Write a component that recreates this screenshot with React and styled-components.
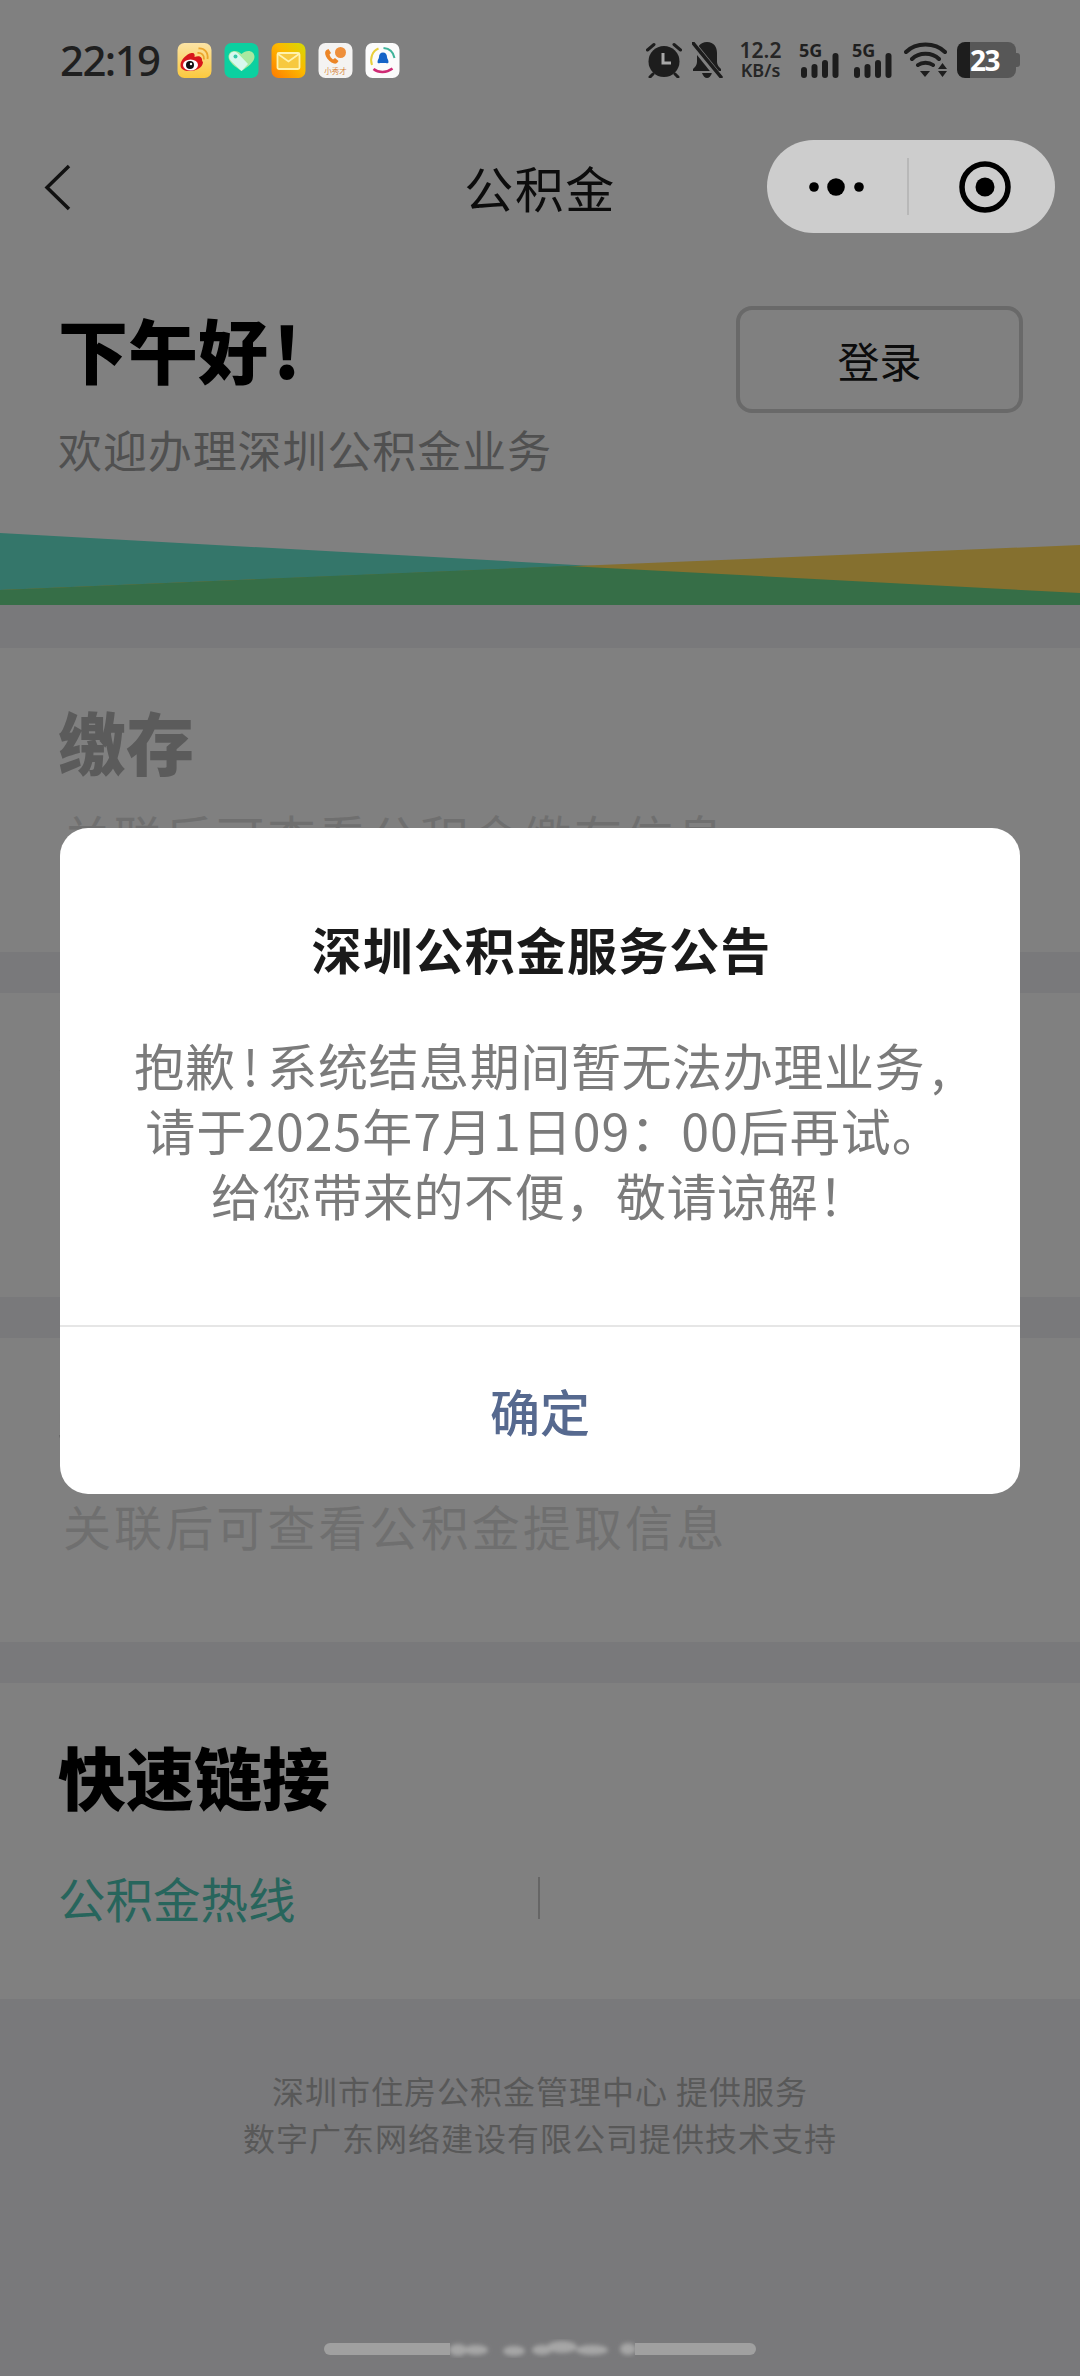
import React from "react";
import styled, { createGlobalStyle } from "styled-components";

const GlobalStyle = createGlobalStyle`
  html, body {
    margin: 0;
    padding: 0;
    background: #79797b;
  }
  * {
    box-sizing: border-box;
  }
`;

const Page = styled.div`
  position: relative;
  display: flex;
  flex-direction: column;
  width: 1080px;
  height: 2376px;
  overflow: hidden;
  background: #79797b;
  font-family: "Noto Sans CJK SC", "Noto Sans", sans-serif;
`;

const Header = styled.header`
  display: flex;
  flex-direction: column;
  height: 605px;
  background: #808080;
`;

const StatusBar = styled.div`
  display: flex;
  align-items: flex-start;
  justify-content: space-between;
  height: 140px;
  padding: 42px 64px 0 60px;
`;

const StatusLeft = styled.div`
  display: flex;
  align-items: center;
  height: 36px;
`;

const Time = styled.span`
  width: 117px;
  font-family: "Noto Sans", sans-serif;
  font-size: 42px;
  font-weight: 500;
  line-height: 36px;
  letter-spacing: -1.6px;
  color: #1f1f1f;
`;

const AppIcons = styled.div`
  display: flex;
  gap: 12px;
`;

const StatusRight = styled.div`
  display: flex;
  align-items: flex-start;
  height: 36px;
`;

const StatusIcon = styled.svg`
  display: block;
  flex: none;
  margin-left: ${props => props.$gap || 0}px;
`;

const Speed = styled.div`
  display: flex;
  flex-direction: column;
  align-items: center;
  width: 43px;
  margin: -2px 0 0 16px;
  font-family: "Noto Sans", sans-serif;
  font-weight: 600;
  color: #262626;
`;

const SpeedValue = styled.span`
  font-size: 21px;
  line-height: 20px;
`;

const SpeedUnit = styled.span`
  font-size: 18px;
  line-height: 20px;
  white-space: nowrap;
`;

const Signal = styled.div`
  position: relative;
  width: 41px;
  height: 36px;
  margin-left: ${props => props.$gap}px;
`;

const SignalLabel = styled.span`
  position: absolute;
  top: -2px;
  left: 0;
  font-family: "Noto Sans", sans-serif;
  font-size: 18px;
  font-weight: 700;
  line-height: 20px;
  color: #1f1f1f;
`;

const SignalMeter = styled.svg`
  position: absolute;
  top: 0;
  left: 0;
`;

const Battery = styled.div`
  position: relative;
  display: flex;
  align-items: center;
  width: 59px;
  height: 36px;
  margin-left: 10px;
  padding-left: 13px;
  border-radius: 8px;
  background: linear-gradient(to right, #1d1d1d 13px, #575757 13px);
  font-family: "Noto Sans", sans-serif;
  font-size: 28px;
  font-weight: 700;
  line-height: 36px;
  letter-spacing: -1.5px;
  color: #fff;

  &::after {
    content: "";
    position: absolute;
    top: 11px;
    right: -4px;
    width: 4px;
    height: 14px;
    border-radius: 0 3px 3px 0;
    background: #575757;
  }
`;

const NavBar = styled.nav`
  display: grid;
  grid-template-columns: 1fr auto 1fr;
  align-items: center;
  height: 93px;
  padding: 0 25px;
`;

const BackIcon = styled.svg`
  display: block;
  margin-left: 19px;
`;

const NavTitle = styled.h1`
  margin: 0;
  font-size: 49px;
  font-weight: 400;
  line-height: 93px;
  letter-spacing: 1.5px;
  color: #0c0c0c;
`;

const Capsule = styled.div`
  display: flex;
  align-items: center;
  justify-self: end;
  width: 288px;
  height: 93px;
  border-radius: 47px;
  background: #cdcdcd;
`;

const CapsuleSide = styled.div`
  display: flex;
  align-items: center;
  justify-content: center;
  flex: 1;
  padding-left: ${props => props.$inset || 0}px;
`;

const CapsuleDivider = styled.div`
  width: 2px;
  height: 57px;
  background: #b8b8b8;
`;

const Intro = styled.div`
  display: flex;
  align-items: flex-start;
  justify-content: space-between;
  padding: 73px 57px 0 60px;
`;

const Greeting = styled.h2`
  margin: 3px 0 0 -2px;
  font-size: 70px;
  font-weight: 900;
  line-height: 80px;
  color: #000;
`;

const GreetingMark = styled.span`
  margin-left: 5px;
`;

const Welcome = styled.p`
  margin: 28px 0 0 -2px;
  font-size: 44px;
  line-height: 64px;
  letter-spacing: 0.9px;
  color: #505050;
`;

const LoginButton = styled.button`
  width: 287px;
  height: 107px;
  border: 4px solid #696969;
  border-radius: 16px;
  background: transparent;
  font-family: inherit;
  font-size: 42px;
  color: #0c0c0c;
`;

const Wave = styled.svg`
  display: block;
  margin-top: auto;
`;

const Section = styled.section`
  height: ${props => props.$tall ? 316 : 304}px;
  margin-top: ${props => props.$first ? 43 : 41}px;
  padding: 48px 60px 0;
  background: #808080;
`;

const SectionTitle = styled.h3`
  margin: 0 0 0 -2px;
  font-size: 68px;
  font-weight: 900;
  line-height: 90px;
  color: ${props => props.$active ? "#000" : "#5b5b5b"};
`;

const SectionHint = styled.p`
  margin: 17px 0 0 3px;
  font-size: 48px;
  line-height: 64px;
  letter-spacing: 3.1px;
  color: #6f6f6f;
`;

const Links = styled.div`
  display: flex;
  align-items: center;
  margin: 45px 0 0 -2px;
`;

const LinkCell = styled.a`
  width: 480px;
  font-size: 47.5px;
  line-height: 64px;
  color: #27655c;
`;

const LinkDivider = styled.span`
  width: 2px;
  height: 42px;
  background: #666;
`;

const Footer = styled.footer`
  display: flex;
  flex: 1;
  flex-direction: column;
  align-items: center;
  padding-top: 68px;
`;

const FooterLine = styled.p`
  margin: 0;
  font-size: 32px;
  line-height: 47px;
  letter-spacing: 1px;
  color: #585858;
`;

const HomeBar = styled.div`
  display: flex;
  align-items: center;
  margin-top: auto;
  margin-bottom: 9px;
`;

const HomePill = styled.span`
  width: ${props => props.$width}px;
  height: 12px;
  border-radius: ${props => props.$left ? "6px 0 0 6px" : "0 6px 6px 0"};
  background: #a0a0a0;
`;

const Modal = styled.div`
  position: absolute;
  top: 828px;
  left: 60px;
  display: flex;
  flex-direction: column;
  width: 960px;
  height: 666px;
  border-radius: 28px;
  background: #fff;
  text-align: center;
`;

const ModalBody = styled.div`
  flex: none;
  height: 499px;
  padding-top: 85px;
  border-bottom: 2px solid #e6e6e6;
`;

const ModalTitle = styled.h4`
  margin: 0 0 0 3px;
  font-size: 50px;
  font-weight: 700;
  line-height: 70px;
  letter-spacing: 1.1px;
  color: #1a1a1a;
`;

const ModalText = styled.p`
  margin: 49px 0 0;
  font-size: 50px;
  line-height: 65px;
  letter-spacing: 0.6px;
  color: #7b7b7b;
`;

const ModalMark = styled.span`
  margin: 0 ${props => props.$after || 0}px 0 ${props => props.$before || 0}px;
`;

const ModalDateLine = styled.span`
  margin-left: 8px;
  letter-spacing: 1px;
`;

const ModalAction = styled.button`
  flex: 1;
  padding: 0 0 2px;
  border: 0;
  background: transparent;
  font-family: inherit;
  font-size: 50px;
  font-weight: 500;
  color: #56698f;
`;

const WeiboIcon = () => (
  <svg width="35" height="35" viewBox="0 0 34 35">
    <defs>
      <linearGradient id="wb" x1="0" y1="0" x2="0" y2="1">
        <stop offset="0" stopColor="#fbe3a5" />
        <stop offset="1" stopColor="#fbc93e" />
      </linearGradient>
    </defs>
    <rect width="34" height="35" rx="7" fill="url(#wb)" />
    <path d="M3 22c0-5 6-11 11-12 3-.6 3.500 1.500 3 4 3-1 6-1 7 1 1 1.500 0 3 1.500 4 0 6-8 9-13 9-6 0-9.500-2-9.500-6z" fill="#d8161b" />
    <ellipse cx="13" cy="22" rx="7.500" ry="5.500" fill="#fff" />
    <circle cx="12.500" cy="22" r="4" fill="#111" />
    <circle cx="13.500" cy="21" r="1.200" fill="#fff" />
    <path d="M20 10c4-.5 7 2 6.500 6.500M21 5.500c6-.5 10 4 9 10.500" fill="none" stroke="#eba52c" strokeWidth="1.800" />
  </svg>
);

const HeartIcon = () => (
  <svg width="35" height="35" viewBox="0 0 34 35">
    <rect width="34" height="35" rx="7" fill="#0bd0a0" />
    <path d="M17 28C11 24 4 19 4 14c0-4 3-6 6-6 2.500 0 5 1 7 3 2-2 4.500-3 7-3 3 0 6 2 6 6 0 5-7 10-13 14z" fill="#a9e9a0" />
    <path d="M17 28l-9.500-9c-2-2-3.500-4-2.500-7 1-3 4-4 6.500-3 1 .4 2 1.200 3 2.400l9 9.600z" fill="#d8f8ee" />
    <circle cx="11" cy="13.500" r="2" fill="#35c9a8" />
  </svg>
);

const MailIcon = () => (
  <svg width="35" height="35" viewBox="0 0 34 35">
    <defs>
      <linearGradient id="ml" x1="0" y1="1" x2="1" y2="0">
        <stop offset="0" stopColor="#ff7a00" />
        <stop offset="0.55" stopColor="#fdb800" />
        <stop offset="1" stopColor="#d4dc05" />
      </linearGradient>
    </defs>
    <rect width="34" height="35" rx="7" fill="url(#ml)" />
    <rect x="6" y="10" width="22" height="16" rx="1.500" fill="#f7c93f" stroke="#fff3ad" strokeWidth="1.800" />
    <path d="M6.500 11l10.500 7.500L27.500 11" fill="none" stroke="#fff3ad" strokeWidth="1.800" />
  </svg>
);

const TutorIcon = () => (
  <svg width="35" height="35" viewBox="0 0 34 35">
    <rect width="34" height="35" rx="7" fill="#f4f3f2" />
    <circle cx="22" cy="9.500" r="5.500" fill="#ee8f3b" />
    <path d="M8 7c-1.500 1-2 3.500-.5 6.500 1.500 3 4.500 6 8 7 2 .5 3.500-.5 4.500-2.500l-3.500-3-2 1.500c-1.500-1-3-3-3.500-5l1.500-1.500L10 6z" fill="#ec8526" />
    <text x="17" y="31" textAnchor="middle" fontSize="7.500" fill="#d98a45" fontFamily="Noto Sans CJK SC">小秀才</text>
  </svg>
);

const NewsIcon = () => (
  <svg width="35" height="35" viewBox="0 0 34 35">
    <rect width="34" height="35" rx="7" fill="#fbfbfb" />
    <path d="M6.500 22C4 15 7 8 13 5.500" fill="none" stroke="#e8cf3c" strokeWidth="2" />
    <path d="M18 5c5.500.5 10 4 11 10" fill="none" stroke="#3fb39a" strokeWidth="2" />
    <path d="M8 26c5 4 13 4 19-.5" fill="none" stroke="#cf2a74" strokeWidth="2.600" />
    <path d="M17.500 9.500c2.500 0 4 2 4 4.500 0 1.500 1.500 3 1.500 5 0 1.500-1.500 1.500-2.500 1h-6c-1 .5-2.500.5-2.500-1 0-2 1.500-3.500 1.500-5 0-2.500 1.500-4.500 4-4.500z" fill="#1463c7" />
  </svg>
);

const AlarmIcon = () => (
  <StatusIcon width="36" height="36" viewBox="0 0 36 36">
    <circle cx="18" cy="19.500" r="15.500" fill="#1d1d1d" />
    <path d="M17 11v10h8" fill="none" stroke="#a8a8a8" strokeWidth="3" />
    <path d="M1.500 8L8 2.500M34.500 8L28 2.500M7 32l-3 3M29 32l3 3" stroke="#1d1d1d" strokeWidth="3" strokeLinecap="round" />
  </StatusIcon>
);

const MuteIcon = () => (
  <StatusIcon $gap={10} width="31" height="36" viewBox="0 0 31 36">
    <path d="M15 0c7 0 10 5 10 11v9c0 3 2 5 4 7v2H1v-2c2-2 4-4 4-7v-9C5 5 8 0 15 0z" fill="#1d1d1d" />
    <path d="M10 31c1 3 3 5 5 5s4-2 5-5z" fill="#1d1d1d" />
    <path d="M-1 0L28 36" stroke="#808080" strokeWidth="7" />
    <path d="M1 1L29 35" stroke="#1d1d1d" strokeWidth="3.500" strokeLinecap="round" />
  </StatusIcon>
);

const SignalBars = () => (
  <SignalMeter width="41" height="36" viewBox="0 0 41 36">
    <rect x="2" y="25" width="6" height="11" rx="3" fill="#1d1d1d" />
    <rect x="12.500" y="22" width="6" height="14" rx="3" fill="#1d1d1d" />
    <rect x="23" y="18" width="6" height="18" rx="3" fill="#1d1d1d" />
    <rect x="33.500" y="11" width="6" height="25" rx="3" fill="#1d1d1d" />
  </SignalMeter>
);

const WifiIcon = () => (
  <StatusIcon $gap={11} width="43" height="36" viewBox="0 0 43 36">
    <path d="M2 10C12 0 31 0 41 10M8 17c7-7 20-7 27 0M14 23c4-3 11-3 15 0" fill="none" stroke="#1d1d1d" strokeWidth="4" strokeLinecap="round" />
    <path d="M16 29h10l-5 6z" fill="#1d1d1d" />
    <path d="M38.500 21l4.500 6h-9zM34 29h9l-4.500 6z" fill="#1d1d1d" />
  </StatusIcon>
);

const App = () => (
  <Page>
    <GlobalStyle />
    <Header>
      <StatusBar>
        <StatusLeft>
          <Time>22:19</Time>
          <AppIcons>
            <WeiboIcon />
            <HeartIcon />
            <MailIcon />
            <TutorIcon />
            <NewsIcon />
          </AppIcons>
        </StatusLeft>
        <StatusRight>
          <AlarmIcon />
          <MuteIcon />
          <Speed>
            <SpeedValue>12.2</SpeedValue>
            <SpeedUnit>KB/s</SpeedUnit>
          </Speed>
          <Signal $gap={17}>
            <SignalBars />
            <SignalLabel>5G</SignalLabel>
          </Signal>
          <Signal $gap={12}>
            <SignalBars />
            <SignalLabel>5G</SignalLabel>
          </Signal>
          <WifiIcon />
          <Battery>23</Battery>
        </StatusRight>
      </StatusBar>

      <NavBar>
        <BackIcon width="28" height="48" viewBox="0 0 28 48">
          <path d="M25 3L3 24.500 25 46" fill="none" stroke="#111" strokeWidth="3.500" />
        </BackIcon>
        <NavTitle>公积金</NavTitle>
        <Capsule>
          <CapsuleSide>
            <svg width="70" height="20" viewBox="0 0 70 20">
              <circle cx="12" cy="10" r="4.800" fill="#000" />
              <circle cx="34" cy="10" r="8.800" fill="#000" />
              <circle cx="57" cy="10" r="4.800" fill="#000" />
            </svg>
          </CapsuleSide>
          <CapsuleDivider />
          <CapsuleSide $inset={6}>
            <svg width="54" height="54" viewBox="0 0 54 54">
              <circle cx="27" cy="27" r="23" fill="none" stroke="#000" strokeWidth="5.500" />
              <circle cx="27" cy="27" r="9.500" fill="#000" />
            </svg>
          </CapsuleSide>
        </Capsule>
      </NavBar>

      <Intro>
        <div>
          <Greeting>下午好<GreetingMark>!</GreetingMark></Greeting>
          <Welcome>欢迎办理深圳公积金业务</Welcome>
        </div>
        <LoginButton>登录</LoginButton>
      </Intro>

      <Wave width="1080" height="72" viewBox="0 0 1080 72">
        <polygon points="0,0 1080,60 1080,72 0,72" fill="#34766a" />
        <polygon points="0,57 1080,12 1080,72 0,72" fill="#85702f" />
        <polygon points="0,57 568,33 1080,60 1080,72 0,72" fill="#366e47" />
      </Wave>
    </Header>

    <Section $first>
      <SectionTitle>缴存</SectionTitle>
      <SectionHint>关联后可查看公积金缴存信息</SectionHint>
    </Section>
    <Section>
      <SectionTitle>贷款</SectionTitle>
      <SectionHint>关联后可查看公积金贷款信息</SectionHint>
    </Section>
    <Section>
      <SectionTitle>提取</SectionTitle>
      <SectionHint>关联后可查看公积金提取信息</SectionHint>
    </Section>
    <Section $tall>
      <SectionTitle $active>快速链接</SectionTitle>
      <Links>
        <LinkCell>公积金热线</LinkCell>
        <LinkDivider />
      </Links>
    </Section>

    <Footer>
      <FooterLine>深圳市住房公积金管理中心 提供服务</FooterLine>
      <FooterLine>数字广东网络建设有限公司提供技术支持</FooterLine>
      <HomeBar>
        <HomePill $left $width={126} />
        <svg width="185" height="36" viewBox="0 0 185 36">
          <defs>
            <filter id="smudge">
              <feGaussianBlur stdDeviation="2.200" />
            </filter>
          </defs>
          <g fill="#a6a6a6" filter="url(#smudge)">
            <ellipse cx="8" cy="19" rx="9" ry="6" />
            <ellipse cx="26" cy="19" rx="12" ry="5" />
            <ellipse cx="64" cy="20" rx="11" ry="5" />
            <ellipse cx="92" cy="19" rx="10" ry="5" />
            <ellipse cx="112" cy="16" rx="15" ry="6" />
            <ellipse cx="142" cy="19" rx="16" ry="5" />
            <ellipse cx="178" cy="18" rx="8" ry="6" />
          </g>
        </svg>
        <HomePill $width={121} />
      </HomeBar>
    </Footer>

    <Modal>
      <ModalBody>
        <ModalTitle>深圳公积金服务公告</ModalTitle>
        <ModalText>
          抱歉<ModalMark $before={7} $after={8}>!</ModalMark>系统结息期间暂无法办理业务<ModalMark $before={6}>,</ModalMark>
          <br />
          <ModalDateLine>{"请于2025年7月1日09\uFF1A00后再试。"}</ModalDateLine>
          <br />
          {"给您带来的不便\uFF0C敬请谅解\uFF01"}
        </ModalText>
      </ModalBody>
      <ModalAction>确定</ModalAction>
    </Modal>
  </Page>
);

export default App;
